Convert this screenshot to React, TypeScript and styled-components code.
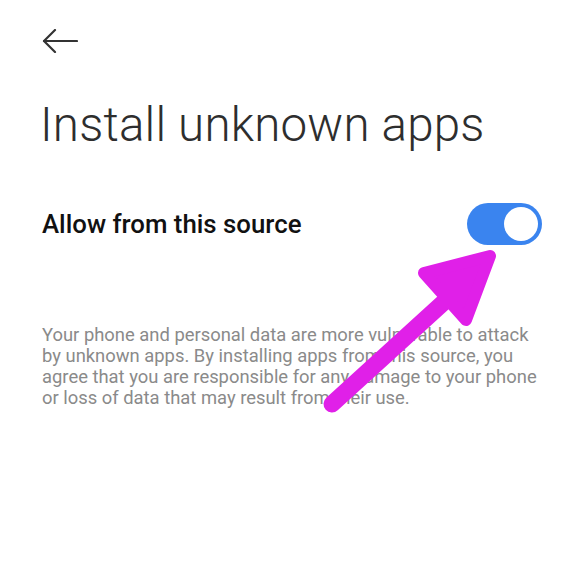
import React from "react";
import styled, { createGlobalStyle } from "styled-components";

const Global = createGlobalStyle`
  html, body { margin: 0; padding: 0; background: #ffffff; }
  body { font-family: Roboto, "Noto Sans", sans-serif; }
`;

const Page = styled.div`
  position: relative;
  width: 576px;
  height: 578px;
  background: #ffffff;
  overflow: hidden;
  padding: 28px 34px 0 42px;
  box-sizing: border-box;
  display: flex;
  flex-direction: column;
`;

const BackButton = styled.button`
  width: 40px;
  height: 26px;
  border: none;
  background: none;
  padding: 0;
  display: flex;
  align-items: center;
  cursor: pointer;
`;

const Title = styled.h1`
  margin: 43px 0 0 -2px;
  font-family: Roboto, sans-serif;
  font-weight: 300;
  font-size: 47.5px;
  line-height: 56px;
  color: #2e2e2e;
  letter-spacing: 0.2px;
  white-space: nowrap;
`;

const SettingRow = styled.div`
  display: flex;
  align-items: center;
  justify-content: space-between;
  margin-top: 50px;
`;

const SettingLabel = styled.span`
  font-family: Roboto, sans-serif;
  font-weight: 500;
  font-size: 25.8px;
  color: #111111;
`;

const Toggle = styled.div<{ $on: boolean }>`
  width: 75px;
  height: 42px;
  border-radius: 21px;
  background: ${(p) => (p.$on ? "#3a84ef" : "#cccccc")};
  display: flex;
  align-items: center;
  justify-content: ${(p) => (p.$on ? "flex-end" : "flex-start")};
  padding: 0 4px;
  box-sizing: border-box;
`;

const Knob = styled.div`
  width: 34px;
  height: 34px;
  border-radius: 50%;
  background: #ffffff;
`;

const Description = styled.p`
  margin: 79px 0 0 0;
  font-family: Roboto, sans-serif;
  font-size: 18.4px;
  line-height: 21px;
  color: #8a8a8a;
`;

const Annotation = styled.svg`
  position: absolute;
  left: 0;
  top: 0;
  pointer-events: none;
`;

export default function App() {
  return (
    <>
      <Global />
      <Page>
        <BackButton aria-label="Back">
          <svg width="36" height="24" viewBox="0 0 36 24" fill="none" stroke="#333" strokeWidth="2.2" strokeLinecap="round">
            <line x1="2" y1="12" x2="35" y2="12" />
            <polyline points="13,1 2,12 13,23" strokeLinejoin="round" />
          </svg>
        </BackButton>
        <Title>Install unknown apps</Title>
        <SettingRow>
          <SettingLabel>Allow from this source</SettingLabel>
          <Toggle $on={true}>
            <Knob />
          </Toggle>
        </SettingRow>
        <Description>
          Your phone and personal data are more vulnerable to attack by unknown apps. By installing apps from this source, you agree that you are responsible for any damage to your phone or loss of data that may result from their use.
        </Description>
        <Annotation width="576" height="578" viewBox="0 0 576 578">
          <line x1="332" y1="404" x2="466" y2="282" stroke="#e020e8" strokeWidth="17" strokeLinecap="round" />
          <polygon points="424,273 490,256 466,320" fill="#e020e8" stroke="#e020e8" strokeWidth="12" strokeLinejoin="round" />
        </Annotation>
      </Page>
    </>
  );
}
